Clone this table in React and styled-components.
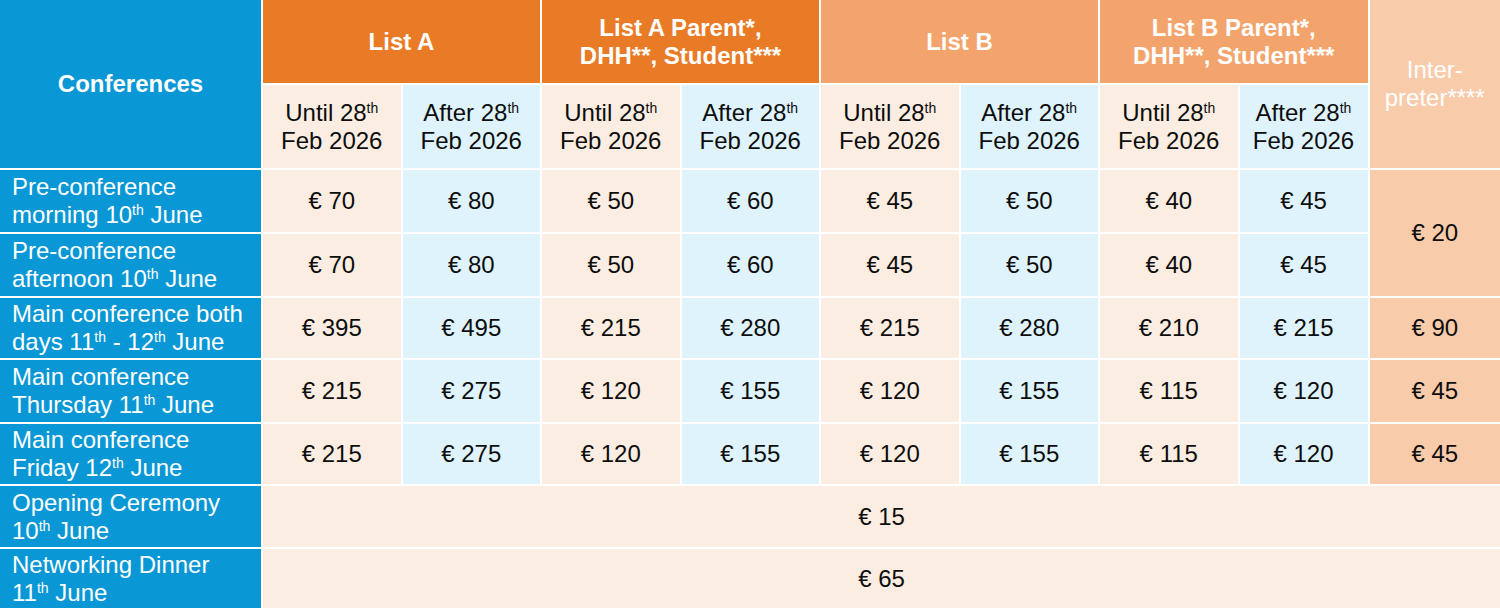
import { createGlobalStyle } from "styled-components";
import styled from "styled-components";

const GlobalStyle = createGlobalStyle`
  html, body {
    margin: 0;
    padding: 0;
    background: #ffffff;
  }
  body {
    font-family: "Liberation Sans", Arial, sans-serif;
  }
`;

const colors = {
  blue: "#0a97d5",
  orange: "#e97a26",
  lightOrange: "#f3a46c",
  interpreter: "#f8cbab",
  peach: "#fcede2",
  sky: "#dff3fc",
};

const Table = styled.div`
  display: grid;
  width: 1500px;
  height: 608px;
  grid-template-columns: 261px repeat(7, 137.5px) 128px 1fr;
  grid-template-rows: 83px 83px 62px 62px 60px 62px 60px 61px 1fr;
  gap: 2px;
  background: #ffffff;
  font-size: 24px;
  line-height: 28px;
`;

const Cell = styled.div`
  display: flex;
  align-items: center;
  justify-content: center;
  text-align: center;
  background: ${(p) => p.$bg};
  color: ${(p) => p.$color || "#0d0d0d"};
  font-weight: ${(p) => (p.$bold ? 700 : 400)};
  grid-column: ${(p) => (p.$colSpan ? `span ${p.$colSpan}` : "auto")};
  grid-row: ${(p) => (p.$rowSpan ? `span ${p.$rowSpan}` : "auto")};
`;

const LabelCell = styled.div`
  display: flex;
  align-items: center;
  padding: 0 8px 0 12px;
  background: ${colors.blue};
  color: #ffffff;
`;

const Sup = styled.sup`
  font-size: 14px;
  line-height: 0;
  vertical-align: 8px;
`;

const groups = [
  { name: "List A", bg: colors.orange },
  {
    name: (
      <>
        List A Parent*,
        <br />
        DHH**, Student***
      </>
    ),
    bg: colors.orange,
  },
  { name: "List B", bg: colors.lightOrange },
  {
    name: (
      <>
        List B Parent*,
        <br />
        DHH**, Student***
      </>
    ),
    bg: colors.lightOrange,
  },
];

const rows = [
  {
    label: (
      <>
        Pre-conference
        <br />
        morning 10<Sup>th</Sup> June
      </>
    ),
    prices: [70, 80, 50, 60, 45, 50, 40, 45],
    interpreter: { value: 20, span: 2 },
  },
  {
    label: (
      <>
        Pre-conference
        <br />
        afternoon 10<Sup>th</Sup> June
      </>
    ),
    prices: [70, 80, 50, 60, 45, 50, 40, 45],
  },
  {
    label: (
      <>
        Main conference both
        <br />
        days 11<Sup>th</Sup> - 12<Sup>th</Sup> June
      </>
    ),
    prices: [395, 495, 215, 280, 215, 280, 210, 215],
    interpreter: { value: 90 },
  },
  {
    label: (
      <>
        Main conference
        <br />
        Thursday 11<Sup>th</Sup> June
      </>
    ),
    prices: [215, 275, 120, 155, 120, 155, 115, 120],
    interpreter: { value: 45 },
  },
  {
    label: (
      <>
        Main conference
        <br />
        Friday 12<Sup>th</Sup> June
      </>
    ),
    prices: [215, 275, 120, 155, 120, 155, 115, 120],
    interpreter: { value: 45 },
  },
];

const extras = [
  {
    label: (
      <>
        Opening Ceremony
        <br />
        10<Sup>th</Sup> June
      </>
    ),
    price: 15,
  },
  {
    label: (
      <>
        Networking Dinner
        <br />
        11<Sup>th</Sup> June
      </>
    ),
    price: 65,
  },
];

function DateHeader({ after }) {
  return (
    <Cell $bg={after ? colors.sky : colors.peach}>
      <span>
        {after ? "After" : "Until"} 28<Sup>th</Sup>
        <br />
        Feb 2026
      </span>
    </Cell>
  );
}

function RowCells({ row }) {
  return (
    <>
      <LabelCell>
        <span>{row.label}</span>
      </LabelCell>
      {row.prices.map((p, i) => (
        <Cell key={i} $bg={i % 2 === 1 ? colors.sky : colors.peach}>
          € {p}
        </Cell>
      ))}
      {row.interpreter && (
        <Cell $bg={colors.interpreter} $rowSpan={row.interpreter.span}>
          € {row.interpreter.value}
        </Cell>
      )}
    </>
  );
}

function ExtraRow({ item }) {
  return (
    <>
      <LabelCell>
        <span>{item.label}</span>
      </LabelCell>
      <Cell $bg={colors.peach} $colSpan={9}>
        € {item.price}
      </Cell>
    </>
  );
}

export default function App() {
  return (
    <>
      <GlobalStyle />
      <Table>
        <Cell $bg={colors.blue} $color="#ffffff" $bold $rowSpan={2}>
          Conferences
        </Cell>
        {groups.map((g, i) => (
          <Cell key={i} $bg={g.bg} $color="#ffffff" $bold $colSpan={2}>
            <span>{g.name}</span>
          </Cell>
        ))}
        <Cell $bg={colors.interpreter} $color="#ffffff" $rowSpan={2}>
          <span>
            Inter-
            <br />
            preter****
          </span>
        </Cell>
        {[0, 1, 2, 3, 4, 5, 6, 7].map((i) => (
          <DateHeader key={i} after={i % 2 === 1} />
        ))}

        {rows.map((row, r) => (
          <RowCells key={r} row={row} />
        ))}

        {extras.map((x, i) => (
          <ExtraRow key={i} item={x} />
        ))}
      </Table>
    </>
  );
}
